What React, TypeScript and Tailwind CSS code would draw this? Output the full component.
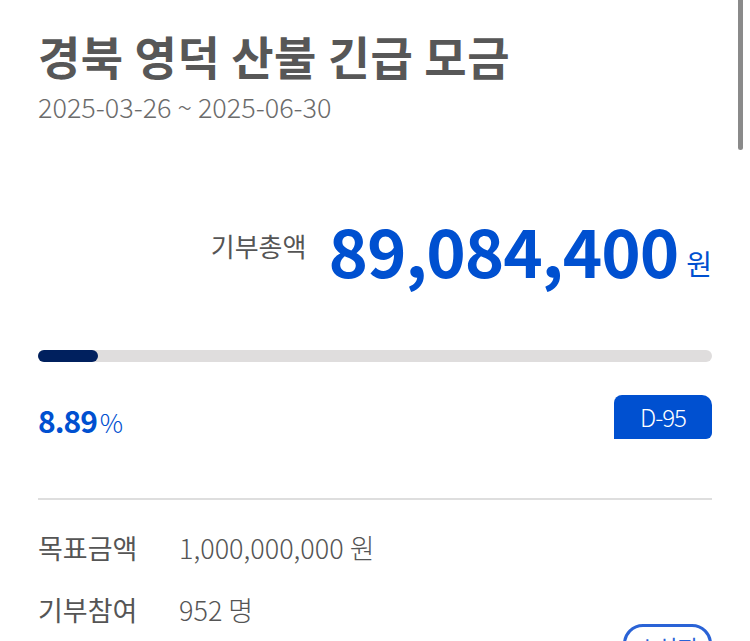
import React from "react";

const font = { fontFamily: '"Noto Sans CJK KR", "Noto Sans", sans-serif' };

export default function App() {
  const raised = 89084400;
  const goal = 1000000000;
  const pct = (raised / goal) * 100;

  return (
    <div className="relative w-[750px] h-[641px] overflow-hidden bg-white" style={font}>
      {/* scroll thumb */}
      <div className="absolute right-[7px] top-0 w-[5px] h-[150px] rounded-b-full bg-[#8a8a8a]" />

      <div className="px-[38px] pt-[27px]">
        <h1 className="text-[46px] leading-[56px] font-bold text-[#575757] tracking-[0.5px]">경북 영덕 산불 긴급 모금</h1>
        <p className="mt-[6px] text-[27px] leading-[36px] font-light text-[#6b6b6b]">2025-03-26 ~ 2025-06-30</p>

        <div className="mt-[84px] flex items-end justify-end gap-[22px]">
          <span className="mb-[30px] text-[26px] text-[#555] leading-none">기부총액</span>
          <div className="flex items-end gap-[8px]">
            <span className="text-[67px] leading-[80px] font-bold text-[#0050d0] tracking-[-1px]">89,084,400</span>
            <span className="mb-[12px] text-[28px] leading-none text-[#0050d0]">원</span>
          </div>
        </div>

        <div className="mt-[61px] h-[12px] w-full rounded-full bg-[#dfdddd]">
          <div className="h-full rounded-full bg-[#00205e]" style={{ width: `${pct}%` }} />
        </div>

        <div className="mt-[33px] flex items-end justify-between">
          <div className="mb-[4px] flex items-end text-[#0050d0]">
            <span className="text-[30px] leading-none font-bold tracking-[-1px]">8.89</span>
            <span className="ml-[3px] text-[26px] leading-none font-light">%</span>
          </div>
          <div className="w-[98px] h-[44px] flex items-center justify-center rounded-tl-[8px] rounded-tr-[10px] rounded-br-[6px] bg-[#0050d0] text-white text-[24px] font-light tracking-[-1px]">
            D-95
          </div>
        </div>

        <div className="mt-[59px] h-[2px] w-full bg-[#dedede]" />

        <dl className="mt-[30px] flex flex-col gap-[26px] text-[27px] text-[#555] leading-[36px]">
          <div className="flex">
            <dt className="w-[141px]">목표금액</dt>
            <dd className="font-light">1,000,000,000 원</dd>
          </div>
          <div className="flex">
            <dt className="w-[141px]">기부참여</dt>
            <dd className="font-light">952 명</dd>
          </div>
        </dl>
      </div>

      <button className="absolute left-[623px] top-[624px] w-[89px] h-[40px] rounded-full border-[3px] border-[#2a63d6] bg-white text-[22px] text-[#2a63d6] leading-none pt-[4px]">
        소식지
      </button>
    </div>
  );
}
